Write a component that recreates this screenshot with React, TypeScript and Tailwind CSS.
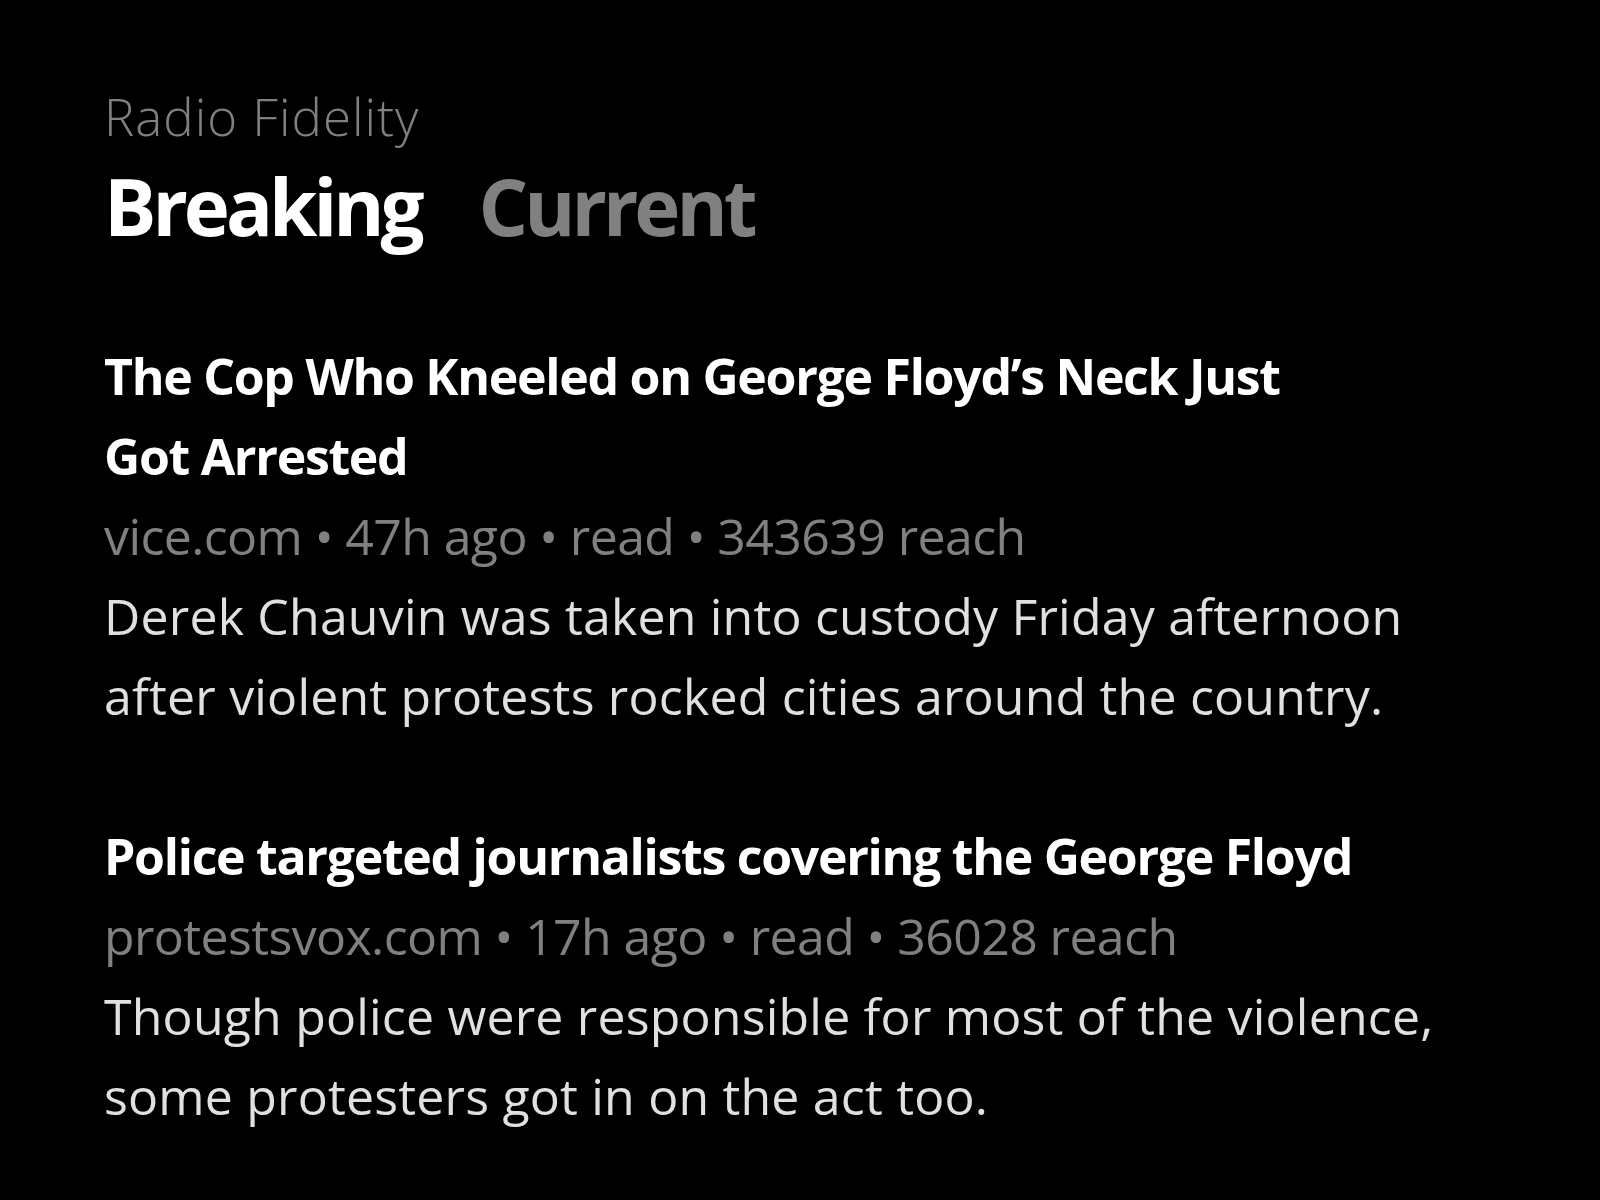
import React from "react";

type Article = {
  title: string;
  meta: string;
  body: string;
};

const articles: Article[] = [
  {
    title: "The Cop Who Kneeled on George Floyd’s Neck Just Got Arrested",
    meta: "vice.com • 47h ago • read • 343639 reach",
    body: "Derek Chauvin was taken into custody Friday afternoon after violent protests rocked cities around the country.",
  },
  {
    title: "Police targeted journalists covering the George Floyd",
    meta: "protestsvox.com • 17h ago • read • 36028 reach",
    body: "Though police were responsible for most of the violence, some protesters got in on the act too.",
  },
];

function ArticleItem({ a }: { a: Article }) {
  return (
    <article className="flex flex-col">
      <h2 className="max-w-[1260px] text-[50px] leading-[80px] font-bold tracking-[-1.3px] text-white">
        {a.title}
      </h2>
      <p className="text-[50px] leading-[80px] font-normal tracking-[-0.6px] text-[#808080]">{a.meta}</p>
      <p className="max-w-[1400px] text-[50px] leading-[80px] font-normal tracking-[0.2px] text-[#e0e0e0]">
        {a.body}
      </p>
    </article>
  );
}

export default function App() {
  return (
    <div className="min-h-screen bg-black font-['Open_Sans',sans-serif] pl-[104px] pt-[86px]">
      <header className="flex flex-col">
        <div className="text-[51px] leading-[60px] font-light tracking-[1px] text-[#808080]">Radio Fidelity</div>
        <nav className="mt-[10px] flex items-baseline gap-[58px] text-[78px] leading-[100px] font-bold tracking-[-4px]">
          <span className="text-white">Breaking</span>
          <span className="text-[#808080]">Current</span>
        </nav>
      </header>
      <main className="mt-20 flex flex-col gap-20">
        {articles.map((a, i) => (
          <ArticleItem key={i} a={a} />
        ))}
      </main>
    </div>
  );
}
